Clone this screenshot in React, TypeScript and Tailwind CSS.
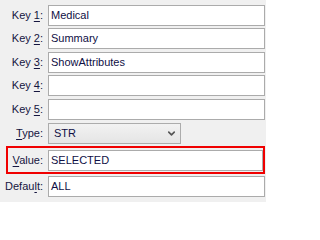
import { ChevronDown } from 'lucide-react';

const font = { fontFamily: '"Liberation Sans", Arial, sans-serif' };

// label with mnemonic letter underlined
const Label = ({ pre, key_, post }: { pre: string; key_: string; post: string }) => (
  <div className="w-[44px] shrink-0 text-right text-[11px] leading-none text-[#15153f] pr-[1px]">
    {pre}
    <span className="underline underline-offset-2">{key_}</span>
    {post}
  </div>
);

const Field = ({ value, className = '' }: { value: string; className?: string }) => (
  <div
    className={`h-[21px] flex items-center bg-white border border-[#ababab] pl-[2px] text-[11px] text-[#0f0f45] ${className}`}
  >
    {value}
  </div>
);

const keys = [
  { n: '1', v: 'Medical' },
  { n: '2', v: 'Summary' },
  { n: '3', v: 'ShowAttributes' },
  { n: '4', v: '' },
  { n: '5', v: '' },
];

export default function App() {
  return (
    <div className="w-[266px] h-[202px] bg-[#f0f0f0] overflow-hidden" style={font}>
      <div className="flex flex-col pt-[5px] pr-[1px]">
        {keys.map((k, i) => (
          <div
            key={k.n}
            className={`flex items-center gap-[4px] ${i === 0 ? '' : i % 2 === 1 ? 'mt-[2px]' : 'mt-[3px]'}`}
          >
            <Label pre="Key " key_={k.n} post=":" />
            <Field value={k.v} className="flex-1" />
          </div>
        ))}

        <div className="flex items-center gap-[4px] mt-[3px]">
          <Label pre="" key_="T" post="ype:" />
          <div className="w-[133px] h-[21px] flex items-center justify-between border border-[#acacac] bg-gradient-to-b from-[#f2f2f2] to-[#e5e5e5] pl-[5px] pr-[3px] text-[11px] text-[#0f0f45]">
            STR
            <ChevronDown size={11} strokeWidth={3.5} className="text-[#555]" />
          </div>
        </div>

        <div className="relative mt-[6px] flex items-center gap-[4px]">
          <Label pre="" key_="V" post="alue:" />
          <Field value="SELECTED" className="flex-1 mr-[2px]" />
          <div className="absolute left-[6px] right-0 -top-[4px] -bottom-[3px] border-2 border-[#f00000] pointer-events-none" />
        </div>

        <div className="flex items-center gap-[4px] mt-[5px]">
          <Label pre="Defau" key_="l" post="t:" />
          <Field value="ALL" className="flex-1" />
        </div>
      </div>
    </div>
  );
}
